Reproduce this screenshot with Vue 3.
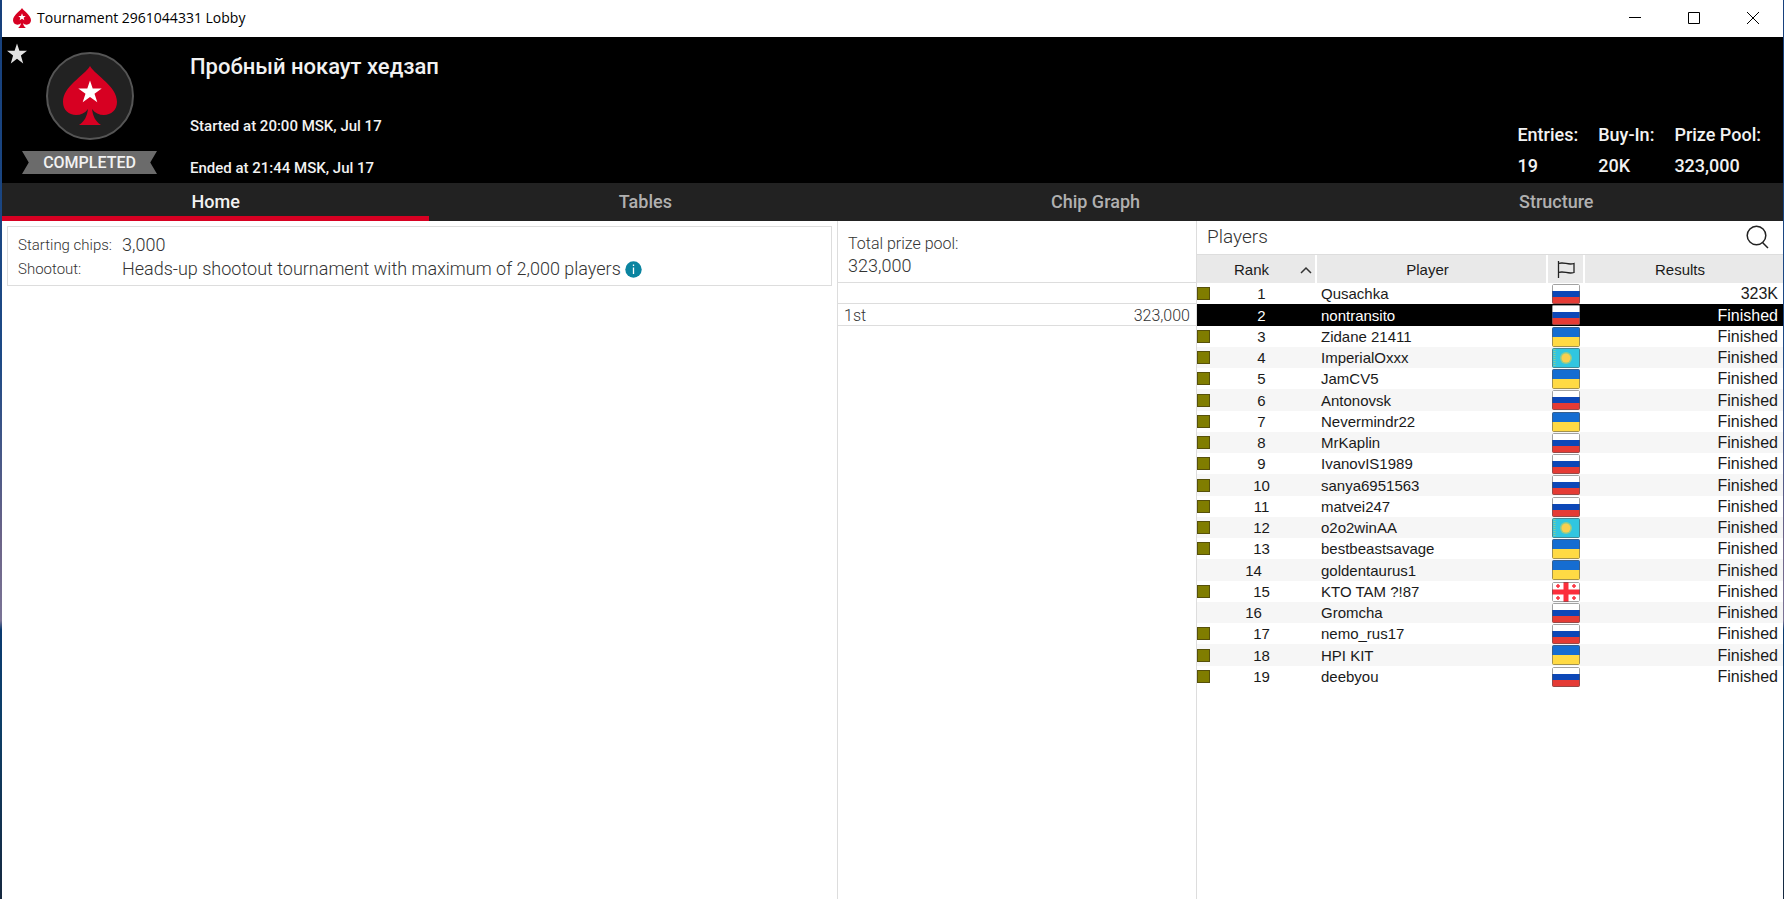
<script setup>
import { ref } from 'vue'

const tabs = ['Home', 'Tables', 'Chip Graph', 'Structure']
const active = ref('Home')

const stats = [
  { label: 'Entries:', value: '19' },
  { label: 'Buy-In:', value: '20K' },
  { label: 'Prize Pool:', value: '323,000' },
]

const players = [
  ['Qusachka', 'ru'],
  ['nontransito', 'ru'],
  ['Zidane 21411', 'ua'],
  ['ImperialOxxx', 'kz'],
  ['JamCV5', 'ua'],
  ['Antonovsk', 'ru'],
  ['Nevermindr22', 'ua'],
  ['MrKaplin', 'ru'],
  ['IvanovIS1989', 'ru'],
  ['sanya6951563', 'ru'],
  ['matvei247', 'ru'],
  ['o2o2winAA', 'kz'],
  ['bestbeastsavage', 'ua'],
  ['goldentaurus1', 'ua'],
  ['KTO TAM ?!87', 'ge'],
  ['Gromcha', 'ru'],
  ['nemo_rus17', 'ru'],
  ['HPI KIT', 'ua'],
  ['deebyou', 'ru'],
].map(([name, flag], i) => ({
  rank: i + 1,
  name,
  flag,
  result: i === 0 ? '323K' : 'Finished',
  tagged: ![14, 16].includes(i + 1),
}))
const selected = ref(2)
</script>

<template>
  <div class="window">
    <header class="titlebar">
      <svg class="app-icon" viewBox="0 0 54 60" aria-hidden="true">
        <path fill="#d70022" d="M27 0C24 8 0 20 0 37c0 8 6 13 13 13 5 0 9-2 11-5-1 6-3 10-8 14v1h22v-1c-5-4-7-8-8-14 2 3 6 5 11 5 7 0 13-5 13-13C54 20 30 8 27 0z" />
        <path fill="#fff" d="M27 16l3 8h8l-6 5 2 8-7-5-7 5 2-8-6-5h8z" />
      </svg>
      <span class="window-title">Tournament 2961044331 Lobby</span>
      <div class="window-buttons">
        <button type="button" aria-label="Minimize">
          <svg viewBox="0 0 12 12"><path d="M0 5.500h12" /></svg>
        </button>
        <button type="button" aria-label="Maximize">
          <svg viewBox="0 0 12 12"><path d="M.5.5h11v11H.5z" /></svg>
        </button>
        <button type="button" aria-label="Close">
          <svg viewBox="0 0 12 12"><path d="M0 0l12 12M12 0L0 12" /></svg>
        </button>
      </div>
    </header>

    <section class="banner">
      <button class="favourite" type="button" aria-label="Favourite">
        <svg viewBox="0 0 20 20"><path fill="#e2e2e2" d="M10 0l2.400 7.300H20l-6.100 4.600 2.300 8.100L10 15.200 3.800 20l2.300-8.100L0 7.300h7.600z" /></svg>
      </button>
      <div class="emblem">
        <svg class="logo" viewBox="0 0 88 88" aria-hidden="true">
          <circle cx="44" cy="44" r="43" fill="#222" stroke="#555" stroke-width="2" />
          <path fill="#d70022" d="M44 14C38 24 17 34 17 50c0 8 6 13 13 13 5 0 9-2 12-6-1 7-3 12-9 16h22c-6-4-8-9-9-16 3 4 7 6 12 6 7 0 13-5 13-13C71 34 50 24 44 14z" />
          <path fill="#fff" d="M44 28.500l2.700 8.100h9l-7.200 5.100 2.800 8.600L44 45l-7.300 5.300 2.800-8.600-7.200-5.100h9z" />
        </svg>
        <span class="status">COMPLETED</span>
      </div>
      <div class="details">
        <h1>Пробный нокаут хедзап</h1>
        <p>Started at 20:00 MSK, Jul 17</p>
        <p>Ended at 21:44 MSK, Jul 17</p>
      </div>
      <dl class="stats">
        <div v-for="s in stats" :key="s.label">
          <dt>{{ s.label }}</dt>
          <dd>{{ s.value }}</dd>
        </div>
      </dl>
    </section>

    <nav class="tabs">
      <button v-for="t in tabs" :key="t" type="button" :class="{ active: t === active }" @click="active = t">{{ t }}</button>
    </nav>

    <main class="content">
      <section class="info">
        <dl class="info-box">
          <dt>Starting chips:</dt>
          <dd>3,000</dd>
          <dt>Shootout:</dt>
          <dd>
            Heads-up shootout tournament with maximum of 2,000 players
            <svg class="info-icon" viewBox="0 0 17 17" role="img" aria-label="Information">
              <circle cx="8.500" cy="8.500" r="8.200" fill="#0a84a0" />
              <path stroke="#fff" stroke-width="1.300" d="M8.500 3.500v1.500M8.500 6.500v6.500" />
            </svg>
          </dd>
        </dl>
      </section>

      <section class="prizes">
        <dl class="pool">
          <dt>Total prize pool:</dt>
          <dd>323,000</dd>
        </dl>
        <div class="spacer"></div>
        <div class="prize"><span>1st</span><span>323,000</span></div>
      </section>

      <section class="players">
        <div class="players-head">
          <h2>Players</h2>
          <button type="button" aria-label="Search players">
            <svg viewBox="0 0 24 24"><circle cx="10.500" cy="10.500" r="9.300" /><path d="M16.500 17.500l5.500 5.500" /></svg>
          </button>
        </div>
        <table>
          <colgroup>
            <col class="c-rank" /><col class="c-player" /><col class="c-flag" /><col />
          </colgroup>
          <thead>
            <tr>
              <th scope="col">
                <div class="rank-head">
                  <span>Rank</span>
                  <svg viewBox="0 0 12 8" aria-hidden="true"><path d="M1 7l5-5 5 5" /></svg>
                </div>
              </th>
              <th scope="col" class="text-head">Player</th>
              <th scope="col">
                <svg class="flag-head" viewBox="0 0 18 17" role="img" aria-label="Country"><path d="M1.500 0v17M1.500 2.500c6-2 9 2 15.500 0v9c-6.500 2-9.500-2-15.500 0" /></svg>
              </th>
              <th scope="col" class="text-head">Results</th>
            </tr>
          </thead>
          <tbody>
            <tr v-for="p in players" :key="p.rank" :class="{ selected: p.rank === selected }" @click="selected = p.rank">
              <td>
                <div class="rank">
                  <i v-if="p.tagged" class="tag"></i>
                  <span>{{ p.rank }}</span>
                </div>
              </td>
              <td class="name">{{ p.name }}</td>
              <td class="flag">
                <svg viewBox="0 0 28 20" role="img" :aria-label="p.flag">
                  <template v-if="p.flag === 'ru'">
                    <path fill="#fff" d="M0 0h28v7H0z" />
                    <path fill="#0c47b7" d="M0 7h28v7H0z" />
                    <path fill="#e53b35" d="M0 13h28v7H0z" />
                  </template>
                  <template v-else-if="p.flag === 'ua'">
                    <path fill="#156dd1" d="M0 0h28v10H0z" />
                    <path fill="#ffda44" d="M0 10h28v10H0z" />
                  </template>
                  <template v-else-if="p.flag === 'kz'">
                    <path fill="#30c6e0" d="M0 0h28v20H0z" />
                    <path stroke="#8ccb92" stroke-width="2" stroke-dasharray="1 1" d="M2.500 1v18" />
                    <circle cx="14" cy="10" r="6" fill="#8fcc8e" />
                    <circle cx="14" cy="10" r="4.500" fill="#f8cf50" />
                  </template>
                  <template v-else>
                    <path fill="#fff" d="M0 0h28v20H0z" />
                    <path stroke="#fb2e3b" stroke-width="5" d="M14 0v20M0 10h28" />
                    <path stroke="#fb2e3b" stroke-width="1.500" d="M6 2v4M4 4h4M22 2v4M20 4h4M6 14v4M4 16h4M22 14v4M20 16h4" />
                  </template>
                  <rect x=".5" y=".5" width="27" height="19" rx="1" fill="none" stroke="#555" stroke-opacity=".55" />
                </svg>
              </td>
              <td class="result">{{ p.result }}</td>
            </tr>
          </tbody>
        </table>
      </section>
    </main>
  </div>
</template>

<style>
body {
  background: #fff;
}
</style>

<style scoped>
.window {
  box-sizing: border-box;
  min-height: 100vh;
  display: flex;
  flex-direction: column;
  border-left: 2px solid;
  border-right: 1px solid;
  border-image: linear-gradient(#17407c 0%, #1d4a86 40%, #6c6488 60%, #7a7496 69%, #0a3a70 70%, #0d3f68 80%, #16283f 100%) 1;
  border-top: 0;
  border-bottom: 0;
  background: #fff;
  color: #222;
  font-family: Roboto, sans-serif;
  font-size: 16px;
}
button {
  border: 0;
  padding: 0;
  background: none;
  font: inherit;
  color: inherit;
}
svg {
  display: block;
}
h1,
h2,
p,
dl,
dd {
  margin: 0;
}

.titlebar {
  box-sizing: border-box;
  display: flex;
  align-items: center;
  height: 37px;
  padding: 0 1px 2px 11px;
  color: #000;
}
.app-icon {
  width: 18px;
  height: 20px;
  margin-right: 6px;
}
.window-title {
  flex: 1;
  font: 14px/20px "Open Sans", sans-serif;
}
.window-buttons {
  display: flex;
}
.window-buttons button {
  width: 59px;
  height: 34px;
  display: grid;
  place-items: center;
}
.window-buttons svg {
  width: 12px;
  height: 12px;
  fill: none;
  stroke: #000;
}

.banner {
  position: relative;
  display: flex;
  height: 146px;
  background: #000;
  color: #f2f2f2;
  font-weight: 500;
}
.favourite {
  position: absolute;
  top: 6px;
  left: 5px;
}
.favourite svg {
  width: 20px;
  height: 21px;
}
.emblem {
  width: 135px;
  margin: 15px 33px 0 20px;
  display: flex;
  flex-direction: column;
  align-items: center;
  gap: 11px;
}
.logo {
  width: 88px;
  height: 88px;
}
.status {
  width: 135px;
  background: #6b6b6b;
  clip-path: polygon(0 0, 100% 0, 95% 50%, 100% 100%, 0 100%, 5% 50%);
  line-height: 23px;
  text-align: center;
}
.details {
  flex: 1;
}
.details h1 {
  margin: 16px 0 33px;
  font-size: 22px;
  font-weight: 500;
  line-height: 28px;
}
.details p {
  font-size: 15px;
  line-height: 24px;
  margin-bottom: 18px;
}
.stats {
  display: flex;
  align-self: flex-end;
  gap: 20px;
  padding: 0 22px 2px 0;
  font-size: 18px;
  line-height: 31px;
}

.tabs {
  display: flex;
  height: 38px;
  background: #222;
}
.tabs button {
  flex: 1 1 auto;
  padding-top: 5px;
  border-bottom: 5px solid transparent;
  color: #b0b0b0;
  font-size: 18px;
  font-weight: 500;
  line-height: 28px;
}
.tabs .active {
  border-color: #d70022;
  color: #f2f2f2;
}

.content {
  flex: 1;
  display: grid;
  grid-template-columns: 835fr 360fr 586fr;
}
.info {
  padding: 5px;
}
.info-box {
  display: grid;
  grid-template-columns: 104px 1fr;
  padding: 6px 10px 4px;
  border: 1px solid #ddd;
  color: #333;
  font-size: 18px;
  font-weight: 300;
  line-height: 24px;
}
.info-box dt {
  font-size: 15px;
}
.info-box dd {
  display: flex;
  align-items: center;
  gap: 4px;
}
.info-icon {
  width: 17px;
  height: 17px;
}
.prizes {
  border-left: 1px solid #ddd;
  border-right: 1px solid #ddd;
  color: #333;
  font-size: 16px;
  font-weight: 300;
}
.pool {
  padding: 12px 10px 5px;
  border-bottom: 1px solid #ddd;
  line-height: 22px;
}
.pool dd {
  font-size: 18px;
}
.spacer {
  height: 20px;
  border-bottom: 1px solid #ddd;
}
.prize {
  display: flex;
  justify-content: space-between;
  padding: 2px 6px 0;
  border-bottom: 1px solid #ddd;
  line-height: 19px;
}

.players-head {
  box-sizing: border-box;
  display: flex;
  justify-content: space-between;
  align-items: center;
  height: 34px;
  padding: 0 13px 2px 10px;
  border-bottom: 1px solid #ddd;
}
.players-head h2 {
  color: #333;
  font-size: 19px;
  font-weight: 300;
}
.players-head svg {
  width: 24px;
  height: 24px;
  fill: none;
  stroke: #222;
  stroke-width: 1.500;
}
table {
  width: 100%;
  border-collapse: collapse;
  table-layout: fixed;
  color: #1a1a1a;
  font: 15px/21px "Liberation Sans", Arial, sans-serif;
}
.c-rank {
  width: 119px;
}
.c-player {
  width: 231px;
}
.c-flag {
  width: 37px;
}
th,
td {
  padding: 0;
}
th {
  height: 28px;
  background: #e9e9e9;
  font-weight: 400;
}
th + th {
  border-left: 2px solid #fff;
}
.text-head {
  padding-right: 8px;
}
.rank-head {
  display: grid;
  grid-template-columns: 1fr 12px;
  align-items: center;
  padding: 0 3px 0 6px;
}
.rank-head svg {
  width: 12px;
  height: 8px;
  margin-top: 2px;
  fill: none;
  stroke: #333;
  stroke-width: 1.500;
}
.flag-head {
  width: 18px;
  height: 17px;
  margin: 0 auto;
  fill: none;
  stroke: #222;
  stroke-width: 1.300;
}
tbody tr {
  height: 21px;
}
tbody tr:nth-child(4n + 2) {
  height: 22px;
}
tbody tr:nth-child(even) {
  background: #f6f6f6;
}
tbody tr.selected {
  background: #000;
  color: #fff;
}
.rank {
  display: flex;
  align-items: center;
  padding-right: 6px;
}
.rank span {
  flex: 1;
  text-align: center;
}
.tag {
  box-sizing: border-box;
  width: 13px;
  height: 13px;
  margin-right: 3px;
  border: 1px solid #56500a;
  background: #807d00;
}
.selected .tag {
  visibility: hidden;
}
.name {
  padding-left: 5px;
}
.flag svg {
  width: 28px;
  height: 20px;
  margin: 0 auto;
  border-radius: 2px;
}
.result {
  padding-right: 5px;
  font-size: 16px;
  text-align: right;
}
</style>
